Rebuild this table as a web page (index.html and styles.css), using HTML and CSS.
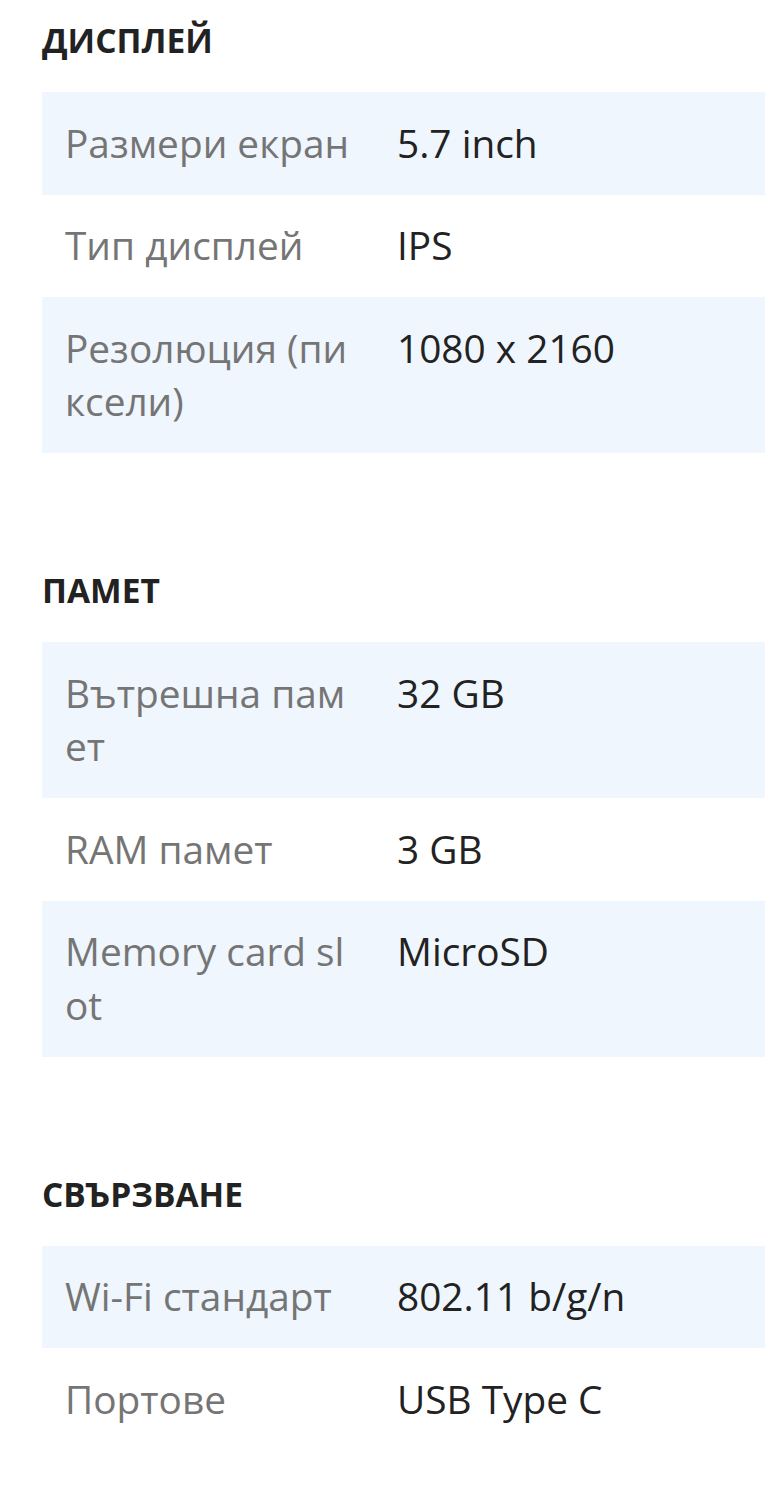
FILE: index.html
```html
<!DOCTYPE html>
<html lang="bg">
<head>
<meta charset="utf-8">
<link rel="stylesheet" href="styles.css">
</head>
<body>
<div class="specs">
  <section class="group">
    <h2 class="group-title">Дисплей</h2>
    <div class="table">
      <div class="row"><div class="label">Размери екран</div><div class="value">5.7 inch</div></div>
      <div class="row"><div class="label">Тип дисплей</div><div class="value">IPS</div></div>
      <div class="row"><div class="label">Резолюция (пиксели)</div><div class="value">1080 x 2160</div></div>
    </div>
  </section>
  <section class="group">
    <h2 class="group-title">Памет</h2>
    <div class="table">
      <div class="row"><div class="label">Вътрешна памет</div><div class="value">32 GB</div></div>
      <div class="row"><div class="label">RAM памет</div><div class="value">3 GB</div></div>
      <div class="row"><div class="label">Memory card slot</div><div class="value">MicroSD</div></div>
    </div>
  </section>
  <section class="group">
    <h2 class="group-title">Свързване</h2>
    <div class="table">
      <div class="row"><div class="label">Wi-Fi стандарт</div><div class="value">802.11 b/g/n</div></div>
      <div class="row"><div class="label">Портове</div><div class="value">USB Type C</div></div>
    </div>
  </section>
</div>
</body>
</html>
```
FILE: styles.css
```css
html, body {
  margin: 0;
  padding: 0;
  background: #ffffff;
}
body {
  font-family: "Open Sans", "Noto Sans", sans-serif;
  color: #222222;
}
.specs {
  padding: 20px 0 0 42px;
  display: flex;
  flex-direction: column;
  gap: 117px;
}
.group-title {
  margin: 0 0 32px 0;
  font-size: 33.5px;
  line-height: 40px;
  font-weight: 700;
  text-transform: uppercase;
  color: #222222;
}
.table {
  display: flex;
  flex-direction: column;
}
.row {
  display: grid;
  grid-template-columns: 332px 1fr;
  font-size: 38.8px;
  line-height: 53.5px;
}
.row:nth-child(odd) {
  background: #eff6fd;
}
.label, .value {
  padding: 24.5px 23px;
}
.label {
  color: #757575;
  word-break: break-all;
}
.value {
  color: #222222;
}
```
